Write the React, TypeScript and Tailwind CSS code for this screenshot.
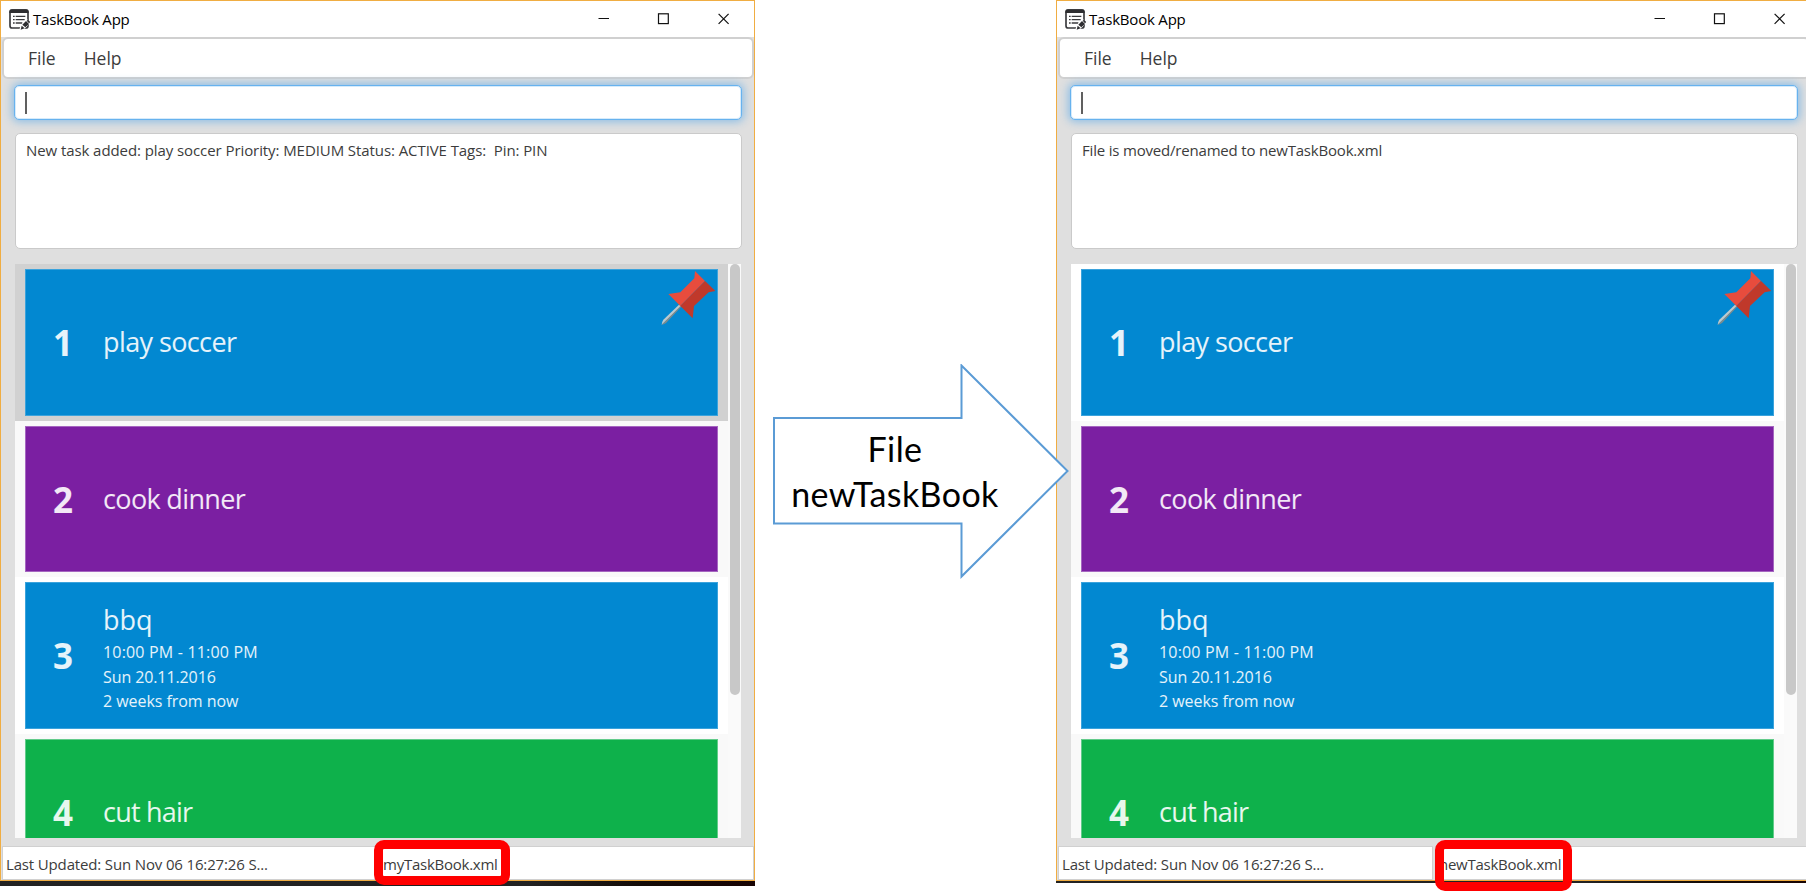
type Task = {
  title: string;
  tracking: string;
  color: string;
  details?: { text: string; tracking: string }[];
  pinned?: boolean;
};

const tasks: Task[] = [
  { title: 'play soccer', tracking: 'tracking-[-0.6px]', color: 'bg-[#0288d1] border-[#3ba3dc]', pinned: true },
  { title: 'cook dinner', tracking: 'tracking-[-0.65px]', color: 'bg-[#7b1fa2] border-[#a566c0]' },
  {
    title: 'bbq',
    tracking: 'tracking-normal',
    color: 'bg-[#0288d1] border-[#3ba3dc]',
    details: [
      { text: '10:00 PM - 11:00 PM', tracking: 'tracking-[0.18px]' },
      { text: 'Sun 20.11.2016', tracking: 'tracking-[-0.1px]' },
      { text: '2 weeks from now', tracking: 'tracking-[-0.05px]' },
    ],
  },
  { title: 'cut hair', tracking: 'tracking-[-0.8px]', color: 'bg-[#0eb14b] border-[#62cb8a]' },
];

function AppIcon() {
  return (
    <svg className="h-[21px] w-[21px]" viewBox="0 0 63 63" fill="none">
      <rect x="3" y="3" width="54" height="54" rx="7" fill="#fff" stroke="#3a3a3d" strokeWidth="5" />
      <path d="M1 12V8q0-7 7-7h44q7 0 7 7v4z" fill="#2e2e31" />
      <path d="M12 22h5M12 32h5M12 42h5" stroke="#3a3a3d" strokeWidth="4" />
      <path d="M20 22h29M20 32h27M20 42h20" stroke="#3a3a3d" strokeWidth="4" />
      <path d="M31 63l4-15 19-17 11 9-22 23z" fill="#fff" />
      <path d="M35 62l3-12 9 8zM40 47l11-11 9 9-11 10zM53 35l4-3 7 7-4 4z" fill="#2e2e31" />
    </svg>
  );
}

function PinIcon() {
  return (
    <svg className="absolute -top-px -right-px h-[58px] w-[58px]" viewBox="60 56 174 174">
      <path d="M117 163L70 208q-5 8-5 15l58-55z" fill="#bdc9ce" />
      <path d="M125 168L78 218q-7 5-13 5l57-57z" fill="#7f8c8d" />
      <path d="M165 62L195 92L121 167L85 131L121 126L163 84Z" fill="#e84c3d" />
      <path d="M195 92L226 122L206 126L162 167L158 204L121 167Z" fill="#c0392b" />
    </svg>
  );
}

function TitleBar() {
  return (
    <div className="flex h-9 shrink-0 items-center justify-between bg-white pr-[24px] pl-2">
      <div className="flex items-center gap-[3px]">
        <AppIcon />
        <span className="text-[15px] leading-9 tracking-[-0.2px] text-black">TaskBook App</span>
      </div>
      <svg className="h-[12px] w-[132px]" viewBox="0 0 132 12" fill="none" stroke="#111" strokeWidth="1.2">
        <path d="M0.5 5.5H11" strokeWidth="1" />
        <rect x="60.5" y="0.8" width="9.8" height="9.8" />
        <path d="M120.6 0.8L130.6 10.8M130.6 0.8L120.6 10.8" />
      </svg>
    </div>
  );
}

function TaskRow({ task, index, selected }: { task: Task; index: number; selected: boolean }) {
  const background = selected ? 'bg-[#d1d1d1]' : index % 2 ? 'bg-[#f9f9f9]' : 'bg-white';
  return (
    <div className={`h-[156.6px] shrink-0 px-[10px] py-[5px] ${background}`}>
      <div className={`relative flex h-full items-center border text-white/90 ${task.color}`}>
        {task.pinned && <PinIcon />}
        <div className="w-[77px] pt-[2px] pl-[27px] text-[35px] leading-10 font-bold">{index + 1}</div>
        <div className={task.details ? 'pt-[3px]' : ''}>
          <div className={`text-[27px] leading-[40px] ${task.tracking}`}>{task.title}</div>
          {task.details?.map((d) => (
            <div key={d.text} className={`text-[16px] leading-[24.6px] ${d.tracking}`}>
              {d.text}
            </div>
          ))}
        </div>
      </div>
    </div>
  );
}

function TaskWindow({
  message,
  tracking,
  fileName,
  selected,
}: {
  message: string;
  tracking: string;
  fileName: string;
  selected?: number;
}) {
  return (
    <div className="flex h-[881px] w-[755px] flex-col border border-[#f0ad42] bg-[#dfdfdf]">
      <TitleBar />
      <div className="ml-px flex h-[42px] shrink-0 items-center gap-[28px] rounded-[6px] border-2 border-[#d0d0d0] bg-white pl-[24px] text-[17.5px] text-[#3c3c3c]">
        <span>File</span>
        <span>Help</span>
      </div>
      <div className="mt-[6px] mr-[12px] ml-[13px] flex h-[35px] shrink-0 items-center rounded-[5px] border border-[#67b2ee] bg-white pl-[10px] shadow-[inset_0_0_0_1px_#d6ebfb,0_0_8px_2px_#8fbfe6]">
        <div className="h-[22px] w-[2px] bg-[#606060]" />
      </div>
      <div className="mt-[13px] mr-[12px] ml-[14px] h-[116px] shrink-0 rounded-[5px] border border-[#cacaca] bg-white pt-[6px] pl-[10px] text-[15px] leading-5 text-[#3c3c3c]">
        <span className={`whitespace-pre ${tracking}`}>{message}</span>
      </div>
      <div className="mt-[15px] mr-[13px] ml-[14px] flex h-[574px] shrink-0">
        <div className="flex grow flex-col overflow-hidden">
          {tasks.map((task, i) => (
            <TaskRow key={task.title} task={task} index={i} selected={selected === i} />
          ))}
        </div>
        <div className="w-[13px] bg-[#fafafa] pl-[2px]">
          <div className="h-[431px] w-[10px] rounded-full bg-[#c8c8c8]" />
        </div>
      </div>
      <div className="ml-px mt-[8px] flex h-[34px] shrink-0 gap-[2px] text-[15px] leading-[30px] text-[#3c3c3c]">
        <div className="w-[375px] border border-[#d0d0d0] bg-white pt-[2px] pl-[3px] tracking-[-0.15px]">
          Last Updated: Sun Nov 06 16:27:26 S...
        </div>
        <div className="grow border border-[#d0d0d0] bg-white pt-[2px] pl-[3px] tracking-[-0.25px]">{fileName}</div>
      </div>
    </div>
  );
}

export default function App() {
  return (
    <div className="relative flex h-[891px] w-[1806px] overflow-hidden bg-white font-['Open_Sans',sans-serif]">
      <div className="w-[755px] shrink-0">
        <TaskWindow
          message="New task added: play soccer Priority: MEDIUM Status: ACTIVE Tags:  Pin: PIN"
          tracking="tracking-[-0.08px]"
          fileName="myTaskBook.xml"
          selected={0}
        />
        <div className="h-[5px] bg-linear-to-r from-[#222] from-70% via-[#140c08] via-85% to-[#180404]" />
      </div>

      <div className="relative z-10 w-[301px] shrink-0 pt-[364px] pl-[17px]">
        <div className="relative h-[215px] w-[298px]">
          <svg className="absolute inset-0 h-full w-full" viewBox="0 0 298 215">
            <path d="M2 54H189.5V1.5L295.5 107L189.5 212.5V159.5H2Z" fill="#fff" stroke="#5b9bd5" strokeWidth="2" />
          </svg>
          <div className="relative w-[246px] pt-[62px] text-center font-['Lato',sans-serif] text-[34px] leading-[45px] tracking-[0.4px] text-black">
            <div>File</div>
            <div>newTaskBook</div>
          </div>
        </div>
      </div>

      <div className="w-[755px] shrink-0">
        <TaskWindow
          message="File is moved/renamed to newTaskBook.xml"
          tracking="tracking-[-0.19px]"
          fileName="newTaskBook.xml"
        />
        <div className="h-[2px] bg-linear-to-r from-[#222] from-70% via-[#140c08] via-85% to-[#180404]" />
      </div>

      <div className="absolute top-[840px] left-[374px] h-[45px] w-[136px] rounded-[10px] border-9 border-[#ff0000]" />
      <div className="absolute top-[840px] left-[1435px] h-[51px] w-[137px] rounded-[10px] border-9 border-[#ff0000]" />
    </div>
  );
}
